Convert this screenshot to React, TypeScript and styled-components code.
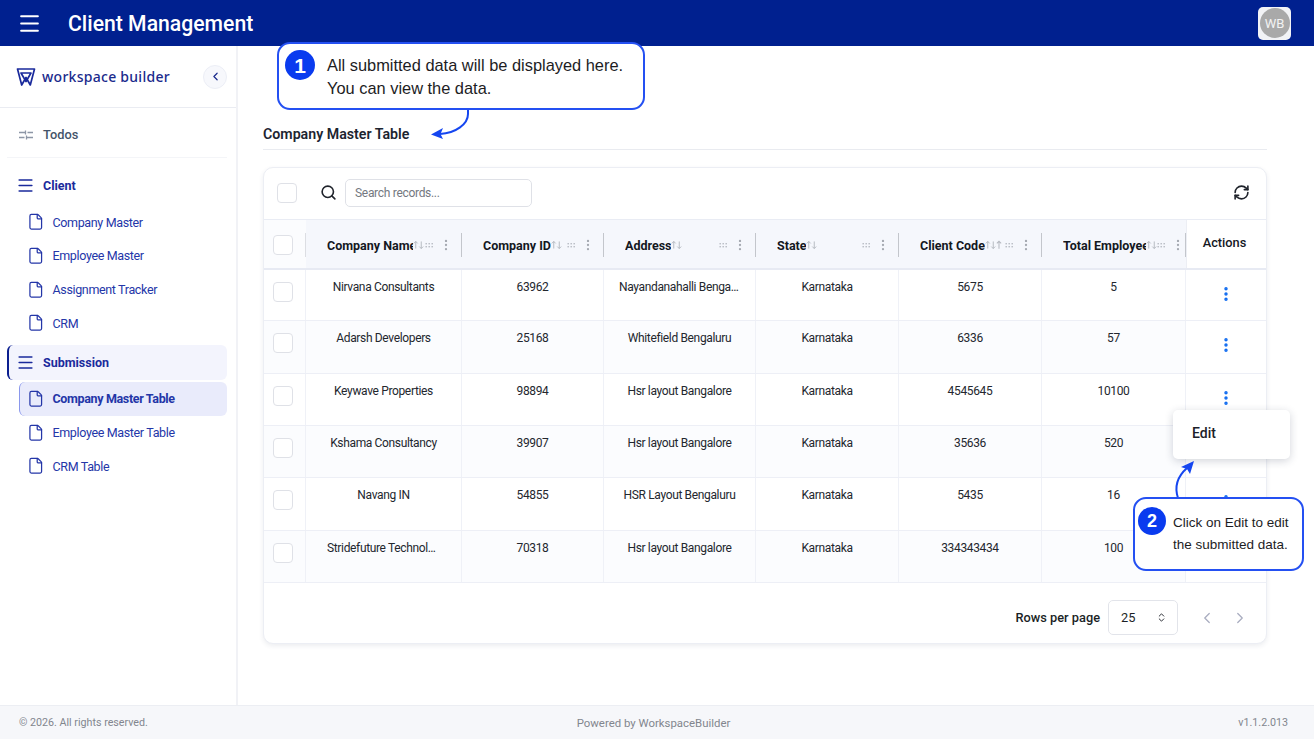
import React from 'react';
import styled, { createGlobalStyle } from 'styled-components';
import {
  ChevronLeft,
  ChevronRight,
  ChevronsUpDown,
  EllipsisVertical,
  File,
  Menu,
  RefreshCw,
  Search,
} from 'lucide-react';

const GlobalStyle = createGlobalStyle`
  html, body { margin: 0; height: 100%; background: #fff; }
  body { font-family: Roboto, "Noto Sans", Arial, sans-serif; overflow: hidden; }
  #root { height: 100%; }
  * { box-sizing: border-box; }
`;

const Page = styled.div`
  position: relative;
  display: grid;
  grid-template-rows: 46px 1fr 34px;
  height: 739px;
  width: 1314px;
  overflow: hidden;
`;

const TopBar = styled.header`
  display: flex;
  align-items: center;
  background: #00208f;
  color: #fff;
  padding: 0 23px 0 17px;
`;
const MenuBtn = styled.div`
  display: flex;
  width: 25px;
  margin-right: 26px;
`;
const AppTitle = styled.h1`
  flex: 1;
  margin: 0;
  padding-top: 1px;
  font-size: 21.2px;
  font-weight: 500;
`;
const AvatarFrame = styled.div`
  display: flex;
  align-items: center;
  justify-content: center;
  width: 33px;
  height: 33px;
  background: #f2f3f6;
  border-radius: 5px;
`;
const Avatar = styled.div`
  display: flex;
  align-items: center;
  justify-content: center;
  width: 30px;
  height: 30px;
  border-radius: 50%;
  background: #a9a9a9;
  color: #f3f3f3;
  font-size: 13px;
`;

const Body = styled.div`
  display: grid;
  grid-template-columns: 238px 1fr;
  min-height: 0;
`;

const Sidebar = styled.aside`
  border-right: 2px solid #f1f2f6;
  background: #fff;
`;
const Brand = styled.div`
  display: flex;
  align-items: center;
  height: 62px;
  padding: 0 9px 0 16px;
  border-bottom: 1px solid #eaecf2;
`;
const BrandName = styled.span`
  flex: 1;
  margin-left: 6px;
  color: #1a2a8c;
  font-family: "Noto Sans", sans-serif;
  font-size: 14px;
  font-weight: 500;
  letter-spacing: 0.27px;
`;
const Collapse = styled.div`
  display: flex;
  align-items: center;
  justify-content: center;
  width: 24px;
  height: 24px;
  border-radius: 50%;
  background: #f7f8fc;
  border: 1px solid #eceef6;
  color: #1a2a8c;
`;
const Nav = styled.nav`
  display: flex;
  flex-direction: column;
  padding: 9px 9px 0 7px;
`;
const TodoRow = styled.div`
  display: flex;
  align-items: center;
  gap: 10px;
  height: 41px;
  padding: 0 0 5px 12px;
  color: #44546a;
  font-size: 12.8px;
  font-weight: 500;
  border-bottom: 1px solid #f4f5f8;
  margin-bottom: 10px;
`;
const GroupRow = styled.div<{ $active?: boolean }>`
  display: flex;
  align-items: center;
  gap: 8px;
  height: 35px;
  padding-left: 7px;
  margin-top: ${(p) => (p.$active ? '5px' : '0')};
  margin-bottom: 2px;
  color: #1a2a9c;
  font-size: 12.5px;
  font-weight: 700;
  border-radius: 6px;
  background: ${(p) => (p.$active ? '#f3f4fd' : 'transparent')};
  border-left: 2px solid ${(p) => (p.$active ? '#0b1f8f' : 'transparent')};
`;
const NavItem = styled.div<{ $active?: boolean }>`
  display: flex;
  align-items: center;
  gap: 8px;
  height: 34px;
  margin-left: 12px;
  margin-bottom: -0.33px;
  padding-left: 7px;
  color: #2436a8;
  font-size: 12.5px;
  letter-spacing: -0.35px;
  font-weight: ${(p) => (p.$active ? 700 : 400)};
  border-radius: 6px;
  background: ${(p) => (p.$active ? '#e9ebfb' : 'transparent')};
  border-left: 1px solid ${(p) => (p.$active ? '#8a97ec' : 'transparent')};
`;

const Main = styled.main`
  padding: 77px 47px 0 25px;
  background: #fff;
`;
const PageTitle = styled.h2`
  margin: 0;
  height: 27px;
  padding-bottom: 4px;
  border-bottom: 1px solid #e9ebf0;
  color: #1c2430;
  font-size: 14.2px;
  font-weight: 600;
  line-height: 22px;
`;
const Card = styled.section`
  margin-top: 17px;
  border: 1px solid #eceef4;
  border-radius: 10px;
  box-shadow: 0 2px 5px rgba(40, 50, 90, 0.09);
  background: #fff;
  overflow: hidden;
`;
const Toolbar = styled.div`
  display: flex;
  align-items: center;
  height: 52px;
  padding: 0 16px 2px 13px;
  border-bottom: 1px solid #e9ecf4;
`;
const Check = styled.span`
  display: block;
  width: 20px;
  height: 20px;
  border: 1.5px solid #dfe1e7;
  border-radius: 4px;
  background: #fff;
`;
const SearchIcon = styled.div`
  display: flex;
  margin-left: 23px;
  color: #20242c;
`;
const SearchBox = styled.div`
  display: flex;
  align-items: center;
  width: 187px;
  height: 28px;
  margin-left: 8px;
  padding-left: 9px;
  border: 1px solid #dfe1e7;
  border-radius: 5px;
  color: #74787f;
  font-size: 12px;
  letter-spacing: -0.3px;
  flex: none;
`;
const Spacer = styled.div`
  flex: 1;
`;

const COLUMNS = '42px 156px 142px 152px 143px 143px 144px 1fr';

const HeadRow = styled.div`
  display: grid;
  grid-template-columns: ${COLUMNS};
  height: 50px;
  border-bottom: 2px solid #e7eaf3;
`;
const HeadCheck = styled.div`
  position: relative;
  display: flex;
  align-items: center;
  justify-content: center;
  background: #fbfcfe;
  padding: 2px 4px 0 0;
  &::after {
    content: '';
    position: absolute;
    right: 0;
    top: 13px;
    height: 24px;
    width: 1px;
    background: #dcdee3;
  }
`;
const HeadCell = styled.div`
  display: flex;
  align-items: center;
  padding: 2px 9px 0 21px;
  background: #f5f7fc;
  position: relative;
  color: #14181f;
  font-size: 12.5px;
  font-weight: 700;
  &::after {
    content: '';
    position: absolute;
    right: 0;
    top: 13px;
    height: 24px;
    width: 1.5px;
    background: #c3c6cc;
  }
`;
const HeadLabel = styled.span<{ $width: number }>`
  width: ${(p) => p.$width}px;
  overflow: hidden;
  white-space: nowrap;
  flex: none;
`;
const SortGlyph = styled.svg`
  flex: none;
  color: #b4b8bf;
`;
const Grip = styled.svg`
  flex: none;
  margin-left: auto;
  color: #b6bac1;
`;
const HeadMenu = styled.div`
  display: flex;
  margin-left: 5px;
  color: #a7abb3;
`;
const ActionsHead = styled.div`
  display: flex;
  justify-content: center;
  padding: 15px 4px 0 0;
  color: #14181f;
  font-size: 12.8px;
  font-weight: 500;
  border-left: 1px solid #eceef4;
`;

const Row = styled.div<{ $height: number; $tint: boolean }>`
  display: grid;
  grid-template-columns: ${COLUMNS};
  height: ${(p) => p.$height}px;
  border-bottom: 1px solid #edeff6;
  background: ${(p) => (p.$tint ? '#fbfcfe' : '#fff')};
`;
const CheckCell = styled.div`
  display: flex;
  justify-content: center;
  padding: 12px 4px 0 0;
  border-right: 1px solid #eff1f7;
`;
const Cell = styled.div`
  padding: 8px 15px 0;
  text-align: center;
  color: #23272e;
  font-size: 12px;
  letter-spacing: -0.35px;
  line-height: 18px;
  white-space: nowrap;
  overflow: hidden;
  text-overflow: ellipsis;
  border-right: 1px solid #eff1f7;
`;
const NameCell = styled(Cell)`
  padding: 8px 21px 0;
`;
const ActionCell = styled.div`
  display: flex;
  justify-content: center;
  padding-top: 15px;
  color: #0f6bf0;
  background: #fff;
`;

const Pager = styled.div`
  display: flex;
  align-items: center;
  justify-content: flex-end;
  height: 60px;
  padding: 9px 2px 0 0;
  color: #1b1f26;
  font-size: 12.8px;
  font-weight: 500;
`;
const RowsSelect = styled.div`
  display: flex;
  align-items: center;
  justify-content: space-between;
  width: 70px;
  height: 35px;
  margin: 0 20px 0 8px;
  padding: 0 10px 0 12px;
  border: 1px solid #e2e4ea;
  border-radius: 5px;
  font-weight: 400;
`;
const PagerBtn = styled.div`
  display: flex;
  width: 33px;
  color: #a9adc0;
`;

const Footer = styled.footer`
  display: grid;
  grid-template-columns: 1fr auto 1fr;
  align-items: center;
  padding: 0 26px 0 19px;
  background: #f6f7fa;
  border-top: 1px solid #eceef3;
  color: #82868e;
  font-size: 10.7px;
`;
const Powered = styled.span`
  font-size: 11.4px;
`;
const Version = styled.span`
  text-align: right;
`;

const Callout = styled.div<{ $top: number; $left: number; $width: number; $height: number }>`
  position: absolute;
  top: ${(p) => p.$top}px;
  left: ${(p) => p.$left}px;
  width: ${(p) => p.$width}px;
  height: ${(p) => p.$height}px;
  display: flex;
  background: #fff;
  border: 2px solid #2450f2;
  border-radius: 13px;
  color: #1d1d1f;
  font-family: "Liberation Sans", Arial, sans-serif;
`;
const CalloutOne = styled(Callout)`
  padding: 6px 0 0 6px;
  gap: 12px;
  font-size: 16.4px;
  line-height: 23px;
`;
const CalloutTwo = styled(Callout)`
  padding: 8px 0 0 3px;
  gap: 7px;
  font-size: 13.5px;
  line-height: 22px;
`;
const CalloutText = styled.div<{ $top: number }>`
  padding-top: ${(p) => p.$top}px;
  white-space: nowrap;
`;
const Badge = styled.span<{ $size: number; $font: number }>`
  display: flex;
  flex: none;
  align-items: center;
  justify-content: center;
  width: ${(p) => p.$size}px;
  height: ${(p) => p.$size}px;
  border-radius: 50%;
  background: #0a3bef;
  color: #fff;
  font-size: ${(p) => p.$font}px;
  font-weight: 700;
`;
const Arrow = styled.svg<{ $top: number; $left: number }>`
  position: absolute;
  top: ${(p) => p.$top}px;
  left: ${(p) => p.$left}px;
  overflow: visible;
`;
const RowMenu = styled.div`
  position: absolute;
  top: 410px;
  left: 1173px;
  width: 117px;
  height: 49px;
  padding: 15px 0 0 19px;
  background: #fff;
  border-radius: 5px;
  box-shadow: 0 2px 9px rgba(30, 40, 70, 0.2);
  color: #1c2129;
  font-size: 14px;
  font-weight: 500;
`;

const rows = [
  { name: 'Nirvana Consultants', id: '63962', address: 'Nayandanahalli Bengaluru', code: '5675', total: '5', height: 51 },
  { name: 'Adarsh Developers', id: '25168', address: 'Whitefield Bengaluru', code: '6336', total: '57', height: 53 },
  { name: 'Keywave Properties', id: '98894', address: 'Hsr layout Bangalore', code: '4545645', total: '10100', height: 52 },
  { name: 'Kshama Consultancy', id: '39907', address: 'Hsr layout Bangalore', code: '35636', total: '520', height: 52 },
  { name: 'Navang IN', id: '54855', address: 'HSR Layout Bengaluru', code: '5435', total: '16', height: 53 },
  { name: 'Stridefuture Technologies', id: '70318', address: 'Hsr layout Bangalore', code: '334343434', total: '100', height: 52 },
];

const columns = [
  { label: 'Company Name', width: 86 },
  { label: 'Company ID', width: 68 },
  { label: 'Address', width: 46 },
  { label: 'State', width: 29 },
  { label: 'Client Code', width: 65, extra: true },
  { label: 'Total Employees', width: 83 },
];

const Logo = () => (
  <svg width="20" height="20" viewBox="0 0 20 20" fill="none" stroke="#1a2a9c" strokeWidth="1.7" strokeLinejoin="round" strokeLinecap="round">
    <path d="M1.5 2 H18.5 L14.3 18 L10 10.5 L5.7 18 Z" />
    <path d="M5 6 H15 L10 14.5 Z" />
  </svg>
);

const Sliders = () => (
  <svg width="14" height="10" viewBox="0 0 14 10" fill="none" stroke="#8d96a6" strokeWidth="1.3">
    <path d="M0 2.5H6M8.5 2.5H14M6.5 0.5V4.5M0 7.5H5.5M8 7.5H14M7.5 5.5V9.5" />
  </svg>
);

const Sort = () => (
  <SortGlyph width="11" height="10" viewBox="0 0 14 11" fill="none" stroke="currentColor" strokeWidth="1.2">
    <path d="M3.5 10V1M1 3.5L3.5 1L6 3.5M10.5 1V10M8 7.5L10.5 10L13 7.5" />
  </SortGlyph>
);

const SortUp = () => (
  <SortGlyph width="6" height="10" viewBox="0 0 7 11" fill="none" stroke="currentColor" strokeWidth="1.2">
    <path d="M3.5 10V1M1 3.5L3.5 1L6 3.5" />
  </SortGlyph>
);

const GripDots = () => (
  <Grip width="9" height="6" viewBox="0 0 9 6" fill="currentColor">
    {[0.5, 3.5, 6.5].map((x) =>
      [1, 4].map((y) => <rect key={`${x}-${y}`} x={x} y={y} width="1.4" height="1.4" />)
    )}
  </Grip>
);

export default function App() {
  return (
    <Page>
      <GlobalStyle />
      <TopBar>
        <MenuBtn>
          <Menu size={25} strokeWidth={2} />
        </MenuBtn>
        <AppTitle>Client Management</AppTitle>
        <AvatarFrame>
          <Avatar>WB</Avatar>
        </AvatarFrame>
      </TopBar>

      <Body>
        <Sidebar>
          <Brand>
            <Logo />
            <BrandName>workspace builder</BrandName>
            <Collapse>
              <ChevronLeft size={13} strokeWidth={2.2} />
            </Collapse>
          </Brand>
          <Nav>
            <TodoRow>
              <Sliders />
              Todos
            </TodoRow>
            <GroupRow>
              <Menu size={19} strokeWidth={2} />
              Client
            </GroupRow>
            {['Company Master', 'Employee Master', 'Assignment Tracker', 'CRM'].map((label) => (
              <NavItem key={label}>
                <File size={17.5} strokeWidth={1.7} />
                {label}
              </NavItem>
            ))}
            <GroupRow $active>
              <Menu size={19} strokeWidth={2} />
              Submission
            </GroupRow>
            <NavItem $active>
              <File size={17.5} strokeWidth={1.7} />
              Company Master Table
            </NavItem>
            {['Employee Master Table', 'CRM Table'].map((label) => (
              <NavItem key={label}>
                <File size={17.5} strokeWidth={1.7} />
                {label}
              </NavItem>
            ))}
          </Nav>
        </Sidebar>

        <Main>
          <PageTitle>Company Master Table</PageTitle>
          <Card>
            <Toolbar>
              <Check />
              <SearchIcon>
                <Search size={17} strokeWidth={2.3} />
              </SearchIcon>
              <SearchBox>Search records...</SearchBox>
              <Spacer />
              <RefreshCw size={17} strokeWidth={2.3} color="#20242c" />
            </Toolbar>
            <HeadRow>
              <HeadCheck>
                <Check />
              </HeadCheck>
              {columns.map((col) => (
                <HeadCell key={col.label}>
                  <HeadLabel $width={col.width}>{col.label}</HeadLabel>
                  <Sort />
                  {col.extra && <SortUp />}
                  <GripDots />
                  <HeadMenu>
                    <EllipsisVertical size={14} strokeWidth={2} />
                  </HeadMenu>
                </HeadCell>
              ))}
              <ActionsHead>Actions</ActionsHead>
            </HeadRow>
            {rows.map((row, i) => (
              <Row key={row.id} $height={row.height} $tint={i % 2 === 1}>
                <CheckCell>
                  <Check />
                </CheckCell>
                <NameCell>{row.name}</NameCell>
                <Cell>{row.id}</Cell>
                <Cell>{row.address}</Cell>
                <Cell>Karnataka</Cell>
                <Cell>{row.code}</Cell>
                <Cell>{row.total}</Cell>
                <ActionCell>
                  <EllipsisVertical size={18} strokeWidth={2.6} />
                </ActionCell>
              </Row>
            ))}
            <Pager>
              Rows per page
              <RowsSelect>
                25
                <ChevronsUpDown size={11} strokeWidth={2} />
              </RowsSelect>
              <PagerBtn>
                <ChevronLeft size={18} strokeWidth={1.7} />
              </PagerBtn>
              <PagerBtn>
                <ChevronRight size={18} strokeWidth={1.7} />
              </PagerBtn>
            </Pager>
          </Card>
        </Main>
      </Body>

      <Footer>
        <span>© 2026. All rights reserved.</span>
        <Powered>Powered by WorkspaceBuilder</Powered>
        <Version>v1.1.2.013</Version>
      </Footer>

      <RowMenu>Edit</RowMenu>

      <Arrow $top={108} $left={428} width="44" height="30" viewBox="0 0 44 30" fill="none">
        <path d="M40 1 V6 C40 16 28 25 12 26" stroke="#1546f0" strokeWidth="2" />
        <path d="M3 26.5 L15 20 L12.5 26 L15 31 Z" fill="#1546f0" />
      </Arrow>
      <Arrow $top={458} $left={1172} width="26" height="40" viewBox="0 0 26 40" fill="none">
        <path d="M6 40 C2 28 6 18 15 10" stroke="#1546f0" strokeWidth="2" />
        <path d="M22 3 L9 9 L15 11 L18 16 Z" fill="#1546f0" />
      </Arrow>

      <CalloutOne $top={42} $left={277} $width={368} $height={68}>
        <Badge $size={30} $font={21}>1</Badge>
        <CalloutText $top={4}>
          All submitted data will be displayed here.
          <br />
          You can view the data.
        </CalloutText>
      </CalloutOne>
      <CalloutTwo $top={497} $left={1133} $width={171} $height={74}>
        <Badge $size={28} $font={18}>2</Badge>
        <CalloutText $top={5}>
          Click on Edit to edit
          <br />
          the submitted data.
        </CalloutText>
      </CalloutTwo>
    </Page>
  );
}
